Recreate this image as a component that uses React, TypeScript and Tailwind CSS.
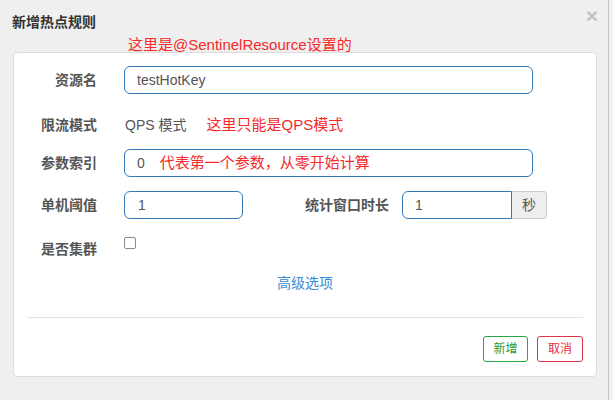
const font = { fontFamily: '"Liberation Sans", "Noto Sans CJK SC", sans-serif' };

const Label = ({ children, className = "" }: { children: React.ReactNode; className?: string }) => (
  <div className={`w-[83px] shrink-0 text-right text-[14px] font-bold leading-[20px] text-[#555] ${className}`}>
    {children}
  </div>
);

export default function App() {
  return (
    <div style={font} className="flex h-[400px] w-[613px] overflow-hidden bg-[#efefef]">
      <div className="relative h-full w-[609px] shrink-0 border-r border-[#c4c4c4]">
        <span className="absolute right-[10px] top-[4px] text-[21px] font-bold leading-[24px] text-[#c2c2c2]">×</span>

        <div className="h-[30px] pl-[12px] pt-[14px] text-[14px] font-bold leading-[16px] text-[#333]">
          新增热点规则
        </div>
        <div className="h-[22px] pl-[128px] pt-[6px] text-[15px] leading-[18px] text-[#f52a2a]">
          这里是@SentinelResource设置的
        </div>

        <div className="ml-[13px] h-[325px] w-[584px] rounded-[4px] border border-[#dcdcdc] bg-white pt-[13px]">
          <div className="flex h-[28px] items-center">
            <Label>资源名</Label>
            <div className="ml-[27px] flex h-[28px] w-[409px] items-center rounded-[6px] border border-[#337ab7] pl-[12px] text-[14px] text-[#555]">
              testHotKey
            </div>
          </div>

          <div className="mt-[20px] flex h-[22px] items-center">
            <Label>限流模式</Label>
            <span className="ml-[28px] text-[14px] text-[#555]">QPS 模式</span>
            <span className="ml-[20px] text-[15px] text-[#f52a2a]">这里只能是QPS模式</span>
          </div>

          <div className="mt-[13px] flex h-[28px] items-center">
            <Label>参数索引</Label>
            <div className="ml-[27px] flex h-[28px] w-[409px] items-center rounded-[6px] border border-[#337ab7] pl-[12px] text-[14px] text-[#555]">
              0
              <span className="ml-[15px] text-[15px] text-[#f52a2a]">代表第一个参数，从零开始计算</span>
            </div>
          </div>

          <div className="mt-[14px] flex h-[28px] items-center">
            <Label>单机阈值</Label>
            <div className="ml-[27px] flex h-[28px] w-[119px] items-center rounded-[6px] border border-[#337ab7] pl-[13px] text-[14px] text-[#555]">
              1
            </div>
            <div className="w-[146px] text-right text-[14px] font-bold leading-[20px] text-[#555]">统计窗口时长</div>
            <div className="ml-[13px] flex h-[28px]">
              <div className="flex w-[110px] items-center rounded-l-[6px] border border-[#337ab7] pl-[12px] text-[14px] text-[#555]">
                1
              </div>
              <div className="flex w-[35px] items-center justify-center rounded-r-[4px] border border-l-0 border-[#ccc] bg-[#eee] text-[14px] text-[#555]">
                秒
              </div>
            </div>
          </div>

          <div className="mt-[18px] flex h-[22px] items-start">
            <Label className="pt-[2px]">是否集群</Label>
            <div className="ml-[27px] h-[12px] w-[12px] rounded-[2px] border border-[#8a8a8a] bg-white" />
          </div>

          <div className="mt-[14px] text-center text-[14px] leading-[20px] text-[#3b8ad0]">高级选项</div>

          <div className="mx-[13px] mt-[24px] h-px bg-[#e2e2e2]" />

          <div className="mt-[18px] flex justify-end gap-[9px] pr-[13px]">
            <button className="h-[26px] w-[45px] rounded-[3px] border border-[#28a745] text-[12px] text-[#1f9a3a]">
              新增
            </button>
            <button className="h-[26px] w-[46px] rounded-[3px] border border-[#dc3545] text-[12px] text-[#e0303e]">
              取消
            </button>
          </div>
        </div>
      </div>
    </div>
  );
}
